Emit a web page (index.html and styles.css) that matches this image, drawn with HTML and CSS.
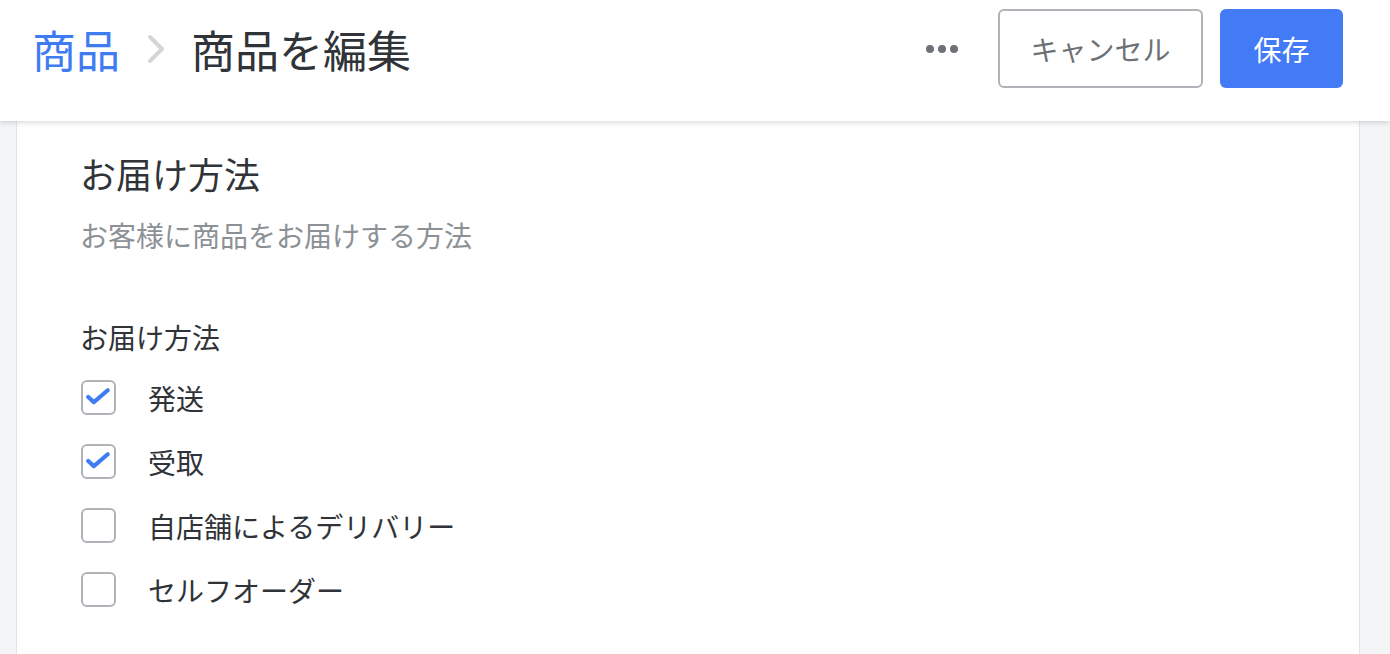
FILE: index.html
```html
<!DOCTYPE html>
<html lang="ja">
<head>
<meta charset="utf-8">
<title>商品を編集</title>
<link rel="stylesheet" href="styles.css">
</head>
<body>
<header class="topbar">
  <nav class="crumbs">
    <a class="crumb-link" href="#">商品</a>
    <svg class="chevron" width="18" height="30" viewBox="0 0 18 30"><path d="M3 3 L15 15 L3 27" fill="none" stroke="#d3d6d9" stroke-width="4" stroke-linecap="round" stroke-linejoin="round"/></svg>
    <h1 class="crumb-current">商品を編集</h1>
  </nav>
  <div class="actions">
    <button class="more" type="button" aria-label="その他"><span></span><span></span><span></span></button>
    <button class="btn btn-cancel" type="button">キャンセル</button>
    <button class="btn btn-save" type="button">保存</button>
  </div>
</header>
<main class="page">
  <section class="card">
    <h2 class="card-title">お届け方法</h2>
    <p class="card-sub">お客様に商品をお届けする方法</p>
    <div class="field-label">お届け方法</div>
    <ul class="options">
      <li class="option">
        <span class="box"><svg width="35" height="35" viewBox="0 0 34 34"><path d="M7 16.5 L12.5 21.5 L26 10" fill="none" stroke="#3f7cf4" stroke-width="4" stroke-linecap="round" stroke-linejoin="round"/></svg></span>
        <span class="opt-text">発送</span>
      </li>
      <li class="option">
        <span class="box"><svg width="35" height="35" viewBox="0 0 34 34"><path d="M7 16.5 L12.5 21.5 L26 10" fill="none" stroke="#3f7cf4" stroke-width="4" stroke-linecap="round" stroke-linejoin="round"/></svg></span>
        <span class="opt-text">受取</span>
      </li>
      <li class="option">
        <span class="box"></span>
        <span class="opt-text">自店舗によるデリバリー</span>
      </li>
      <li class="option">
        <span class="box"></span>
        <span class="opt-text">セルフオーダー</span>
      </li>
    </ul>
  </section>
</main>
</body>
</html>
```
FILE: styles.css
```css
* { box-sizing: border-box; }
html, body { margin: 0; padding: 0; }
body {
  background: #f4f5f7;
  font-family: "Noto Sans CJK JP", "Noto Sans", sans-serif;
  color: #303438;
  height: 654px;
  overflow: hidden;
}
.topbar {
  position: relative;
  z-index: 2;
  height: 121px;
  background: #ffffff;
  box-shadow: 0 1px 6px rgba(0, 0, 0, 0.18);
  display: flex;
  align-items: flex-start;
  justify-content: space-between;
  padding: 9px 47px 0 32px;
}
.crumbs {
  height: 79px;
  display: flex;
  align-items: center;
}
.crumb-link {
  font-size: 44px;
  line-height: 44px;
  color: #3f7cf2;
  text-decoration: none;
}
.chevron {
  margin: 0 26px 0 27px;
  display: block;
}
.crumb-current {
  margin: 0;
  font-size: 44px;
  line-height: 44px;
  font-weight: 400;
  color: #303438;
}
.actions {
  display: flex;
  align-items: center;
  height: 79px;
}
.more {
  display: flex;
  gap: 4px;
  background: none;
  border: 0;
  padding: 0;
  margin-right: 40px;
}
.more span {
  width: 8px;
  height: 8px;
  border-radius: 50%;
  background: #6d7175;
}
.btn {
  height: 79px;
  border-radius: 6px;
  font-family: inherit;
  font-size: 28px;
  line-height: 28px;
  padding: 0;
}
.btn-cancel {
  width: 205px;
  background: #ffffff;
  border: 2px solid #b0b3b7;
  color: #6d7175;
  margin-right: 17px;
}
.btn-save {
  width: 123px;
  background: #437af5;
  border: 0;
  color: #ffffff;
}
.page {
  padding: 0 30px 0 16px;
}
.card {
  background: #ffffff;
  border-left: 1px solid #e3e5e8;
  border-right: 1px solid #e3e5e8;
  padding: 34px 0 40px 63px;
  min-height: 533px;
}
.card-title {
  margin: 0;
  font-size: 36px;
  line-height: 36px;
  font-weight: 400;
  color: #303438;
}
.card-sub {
  margin: 30px 0 0;
  font-size: 28px;
  line-height: 28px;
  color: #8c9196;
}
.field-label {
  margin-top: 74px;
  font-size: 28px;
  line-height: 28px;
  color: #303438;
}
.options {
  list-style: none;
  margin: 29px 0 0;
  padding: 0;
  display: flex;
  flex-direction: column;
  gap: 29px;
}
.option {
  display: flex;
  align-items: center;
  height: 35px;
}
.box {
  width: 35px;
  height: 35px;
  margin-left: 1px;
  border: 2px solid #b0b3b7;
  border-radius: 6px;
  position: relative;
  flex: none;
}
.box svg {
  position: absolute;
  left: -2px;
  top: -2px;
}
.opt-text {
  margin-left: 32px;
  font-size: 28px;
  line-height: 28px;
  color: #303438;
}
```
